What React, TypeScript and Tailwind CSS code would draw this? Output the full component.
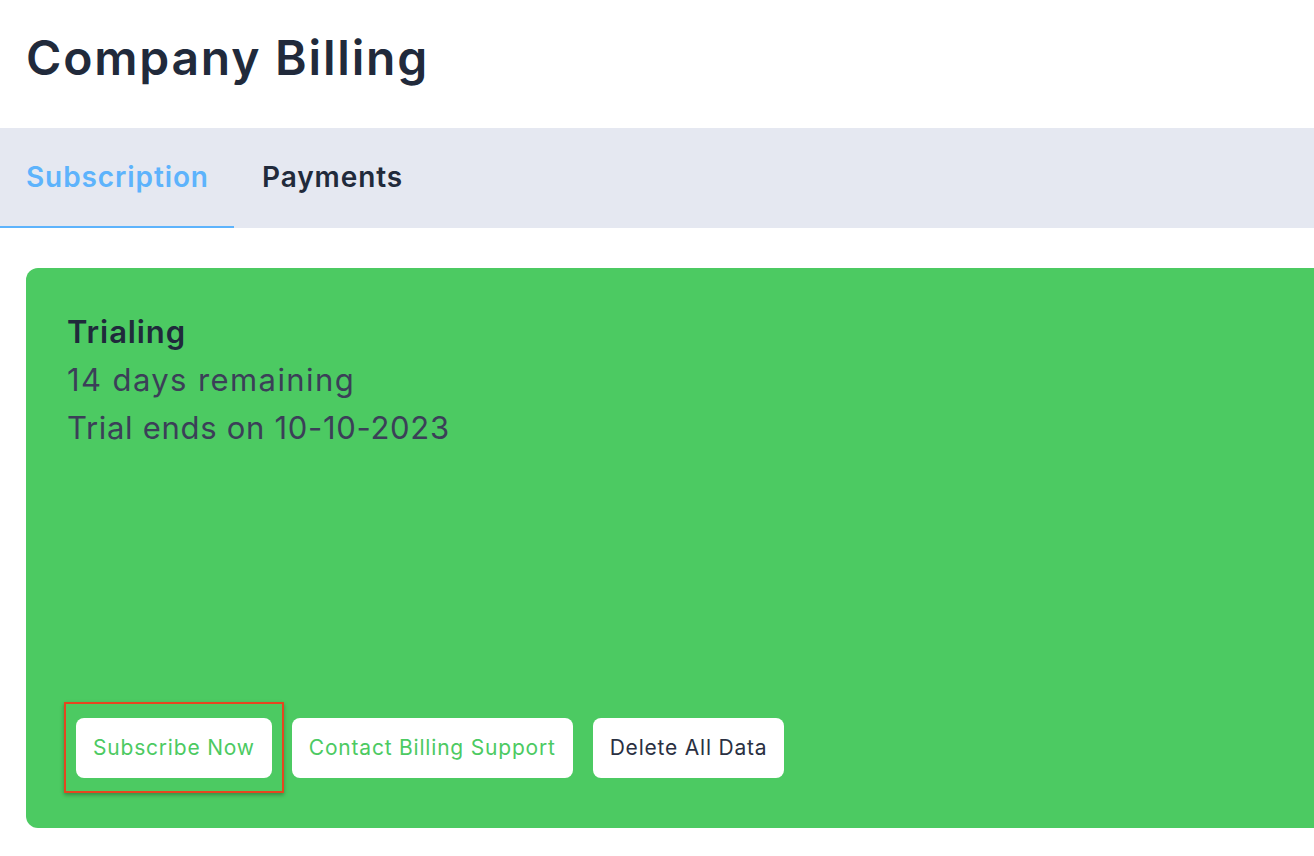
import React from 'react';

const font = { fontFamily: 'Inter, "Noto Sans", sans-serif' };

const App: React.FC = () => {
  return (
    <div className="w-full min-h-[856px] bg-white overflow-hidden" style={font}>
      <h1 className="pl-[26px] pt-[23px] pb-[35px] text-[48px] leading-[70px] font-semibold text-[#212a3b] tracking-[1.8px]">
        Company Billing
      </h1>

      <div className="flex bg-[#e5e8f1] h-[100px]">
        <button className="w-[234px] pl-[26px] text-left h-full text-[28px] font-semibold text-[#5db3fc] border-b-2 border-[#5db3fc] tracking-[0.9px]">
          Subscription
        </button>
        <button className="pl-[28px] h-full text-[28px] font-semibold text-[#212a3b] border-b-2 border-transparent tracking-[0.9px]">
          Payments
        </button>
      </div>

      <div className="pl-[26px] pt-[40px]">
        <div className="w-[1320px] h-[560px] bg-[#4cca62] rounded-[12px] px-[41px] pt-[40px] pb-[50px] flex flex-col justify-between">
          <div className="text-[31px] leading-[48px] text-[#3b3f58] tracking-[0.9px]">
            <p className="font-semibold text-[#1f2a3b]">Trialing</p>
            <p className="tracking-[1.4px]">14 days remaining</p>
            <p className="tracking-[0.7px]">Trial ends on 10-10-2023</p>
          </div>

          <div className="flex gap-[20px] pl-[9px]">
            <div className="relative">
              <button className="h-[60px] px-[17px] bg-white rounded-[8px] text-[21px] text-[#4cca62] tracking-[0.8px]">
                Subscribe Now
              </button>
              <span className="absolute -left-[12px] -right-[12px] -top-[16px] -bottom-[15px] border-2 border-[#e5461f] shadow-[0_2px_4px_rgba(0,0,0,0.3)] pointer-events-none" />
            </div>
            <button className="h-[60px] px-[17px] bg-white rounded-[8px] text-[21px] text-[#4cca62] tracking-[0.8px]">
              Contact Billing Support
            </button>
            <button className="h-[60px] px-[17px] bg-white rounded-[8px] text-[21px] text-[#2a3042] tracking-[0.8px]">
              Delete All Data
            </button>
          </div>
        </div>
      </div>
    </div>
  );
};

export default App;
